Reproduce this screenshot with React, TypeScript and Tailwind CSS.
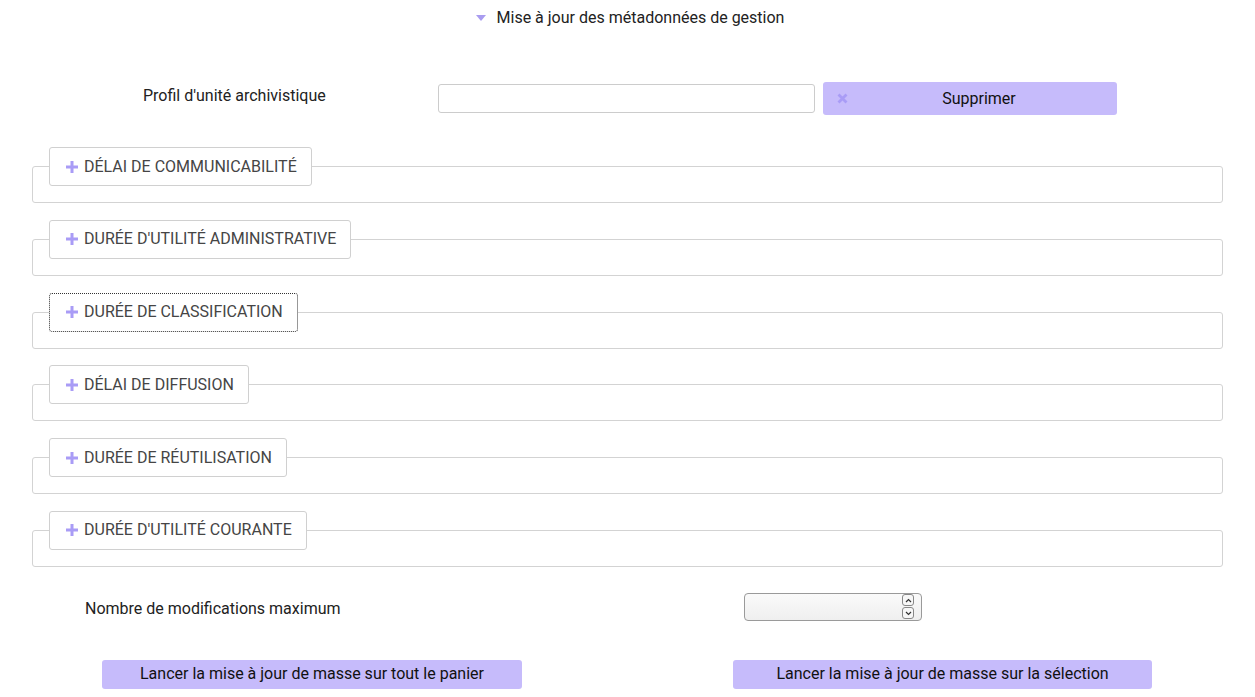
import React from "react"

const sections = [
  "Délai de communicabilité",
  "Durée d'utilité administrative",
  "Durée de classification",
  "Délai de diffusion",
  "Durée de réutilisation",
  "Durée d'utilité courante",
]

function Plus() {
  return (
    <svg width="12" height="12" viewBox="0 0 12 12" className="shrink-0">
      <rect x="0" y="4.5" width="12" height="3" fill="#a99cf6" />
      <rect x="4.5" y="0" width="3" height="12" fill="#a99cf6" />
    </svg>
  )
}

function Section({ title, focused }: { title: string; focused?: boolean }) {
  return (
    <fieldset className="rounded-[3px] border border-[#d3d3d3] px-4 pb-4">
      <legend
        className={
          "flex h-[39px] items-center gap-[6px] rounded-[3px] bg-white pl-4 pr-[14px] uppercase text-[#454545] " +
          (focused ? "border border-dotted border-[#333]" : "border border-[#d0d0d0]")
        }
      >
        <Plus />
        <span>{title}</span>
      </legend>
    </fieldset>
  )
}

export default function App() {
  return (
    <div className="min-h-[697px] bg-white font-['Roboto',sans-serif] text-[16px] text-[#222]">
      <div className="flex items-center justify-center gap-[11px] pt-[6px] pl-[5px]">
        <svg width="10" height="6" viewBox="0 0 10 6">
          <path d="M0 0 L10 0 L5 6 Z" fill="#a99cf0" />
        </svg>
        <span>Mise à jour des métadonnées de gestion</span>
      </div>

      <div className="mt-[52px] flex items-center">
        <div className="mb-[6px] w-[438px] pl-[143px]">Profil d'unité archivistique</div>
        <input
          type="text"
          className="h-[29px] w-[377px] rounded-[3px] border border-[#ccc] bg-white px-2"
        />
        <button className="ml-[8px] flex h-[33px] w-[294px] items-center rounded-[3px] bg-[#c6bbfb] pl-[14px] text-[#111]">
          <svg width="11" height="11" viewBox="0 0 11 11" className="shrink-0">
            <path d="M1.5 1.5 L9.5 9.5 M9.5 1.5 L1.5 9.5" stroke="#a99cf6" strokeWidth="2.8" />
          </svg>
          <span className="flex-1 pr-[7px] text-center">Supprimer</span>
        </button>
      </div>

      <div className="mx-[32px] mt-[32px] flex flex-col gap-[16.8px]">
        {sections.map((s, i) => (
          <Section key={s} title={s} focused={i === 2} />
        ))}
      </div>

      <div className="mt-[26px] flex items-center">
        <div className="mt-[4px] w-[744px] pl-[85px]">Nombre de modifications maximum</div>
        <div className="flex h-[28px] w-[178px] items-center justify-end rounded-[4px] border border-[#9a9a9a] bg-gradient-to-b from-[#fafafa] to-[#efefef] pr-[7px]">
          <div className="flex flex-col gap-[1px]">
            <div className="flex h-[12px] w-[12px] items-center justify-center rounded-[3px] border border-[#888] bg-[#f7f7f7]">
              <svg width="7" height="5" viewBox="0 0 7 5">
                <path d="M1 4 L3.5 1.5 L6 4" stroke="#333" strokeWidth="1.2" fill="none" />
              </svg>
            </div>
            <div className="flex h-[12px] w-[12px] items-center justify-center rounded-[3px] border border-[#888] bg-[#f7f7f7]">
              <svg width="7" height="5" viewBox="0 0 7 5">
                <path d="M1 1 L3.5 3.5 L6 1" stroke="#333" strokeWidth="1.2" fill="none" />
              </svg>
            </div>
          </div>
        </div>
      </div>

      <div className="mt-[39px] flex justify-between pl-[102px] pr-[103px]">
        <button className="h-[29px] w-[420px] rounded-[3px] bg-[#c6bbfb] text-[#111]">
          Lancer la mise à jour de masse sur tout le panier
        </button>
        <button className="h-[29px] w-[419px] rounded-[3px] bg-[#c6bbfb] text-[#111]">
          Lancer la mise à jour de masse sur la sélection
        </button>
      </div>
    </div>
  )
}
